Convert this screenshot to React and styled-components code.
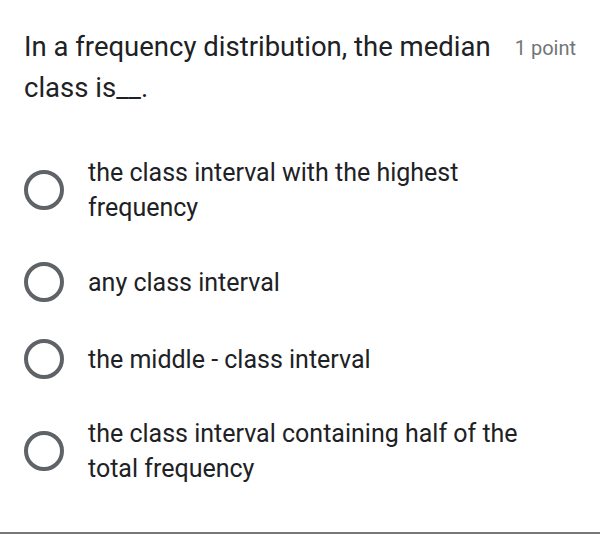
import styled, { createGlobalStyle } from 'styled-components';

const GlobalStyle = createGlobalStyle`
    html, body {
        margin: 0;
        padding: 0;
        background: #fff;
    }
    body {
        font-family: Roboto, "Liberation Sans", sans-serif;
    }
`;

const Card = styled.div`
    width: 600px;
    height: 534px;
    box-sizing: border-box;
    padding: 26px 24px 0 24px;
    border-bottom: 2px solid #777;
    display: flex;
    flex-direction: column;
`;

const Header = styled.div`
    display: flex;
    align-items: flex-start;
    gap: 20px;
`;

const Title = styled.div`
    flex: 1;
    font-size: 27.5px;
    line-height: 41px;
    color: #202124;
`;

const Points = styled.div`
    font-size: 20px;
    line-height: 41px;
    color: #70757a;
    white-space: nowrap;
    padding-top: 2px;
`;

const OptionList = styled.div`
    margin-top: 47px;
    display: flex;
    flex-direction: column;
    gap: 37px;
`;

const Option = styled.label`
    display: flex;
    align-items: center;
    gap: 24px;
    cursor: pointer;
`;

const Radio = styled.span`
    flex: none;
    width: 40px;
    height: 40px;
    box-sizing: border-box;
    border: 4px solid #5f6368;
    border-radius: 50%;
`;

const OptionText = styled.span`
    max-width: 460px;
    font-size: 25px;
    line-height: 35px;
    color: #202124;
`;

const options = [
    'the class interval with the highest frequency',
    'any class interval',
    'the middle - class interval',
    'the class interval containing half of the total frequency',
];

const App = () => {
    return (
        <>
            <GlobalStyle />
            <Card>
                <Header>
                    <Title>In a frequency distribution, the median class is__.</Title>
                    <Points>1 point</Points>
                </Header>
                <OptionList>
                    {options.map((text) => (
                        <Option key={text}>
                            <Radio />
                            <OptionText>{text}</OptionText>
                        </Option>
                    ))}
                </OptionList>
            </Card>
        </>
    );
}
export default App;
